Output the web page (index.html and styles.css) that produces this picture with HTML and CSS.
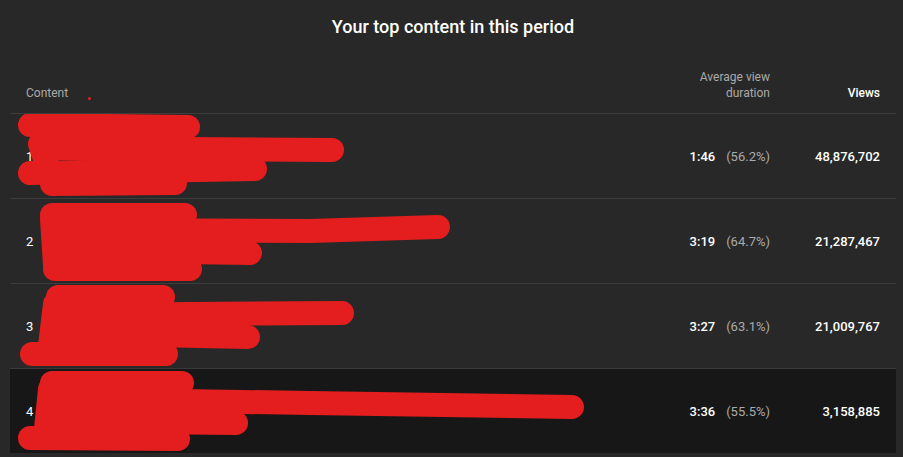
FILE: index.html
```html
<!DOCTYPE html>
<html lang="en">
<head>
    <meta charset="UTF-8">
    <title>Top content</title>
    <link rel="stylesheet" href="styles.css">
</head>
<body>
    <section class="card">
        <h2 class="title">Your top content in this period</h2>

        <div class="table">
            <div class="head">
                <div class="cell content-head">Content <span class="dot"></span></div>
                <div class="cell num">Average view duration</div>
                <div class="cell num views-head">Views</div>
            </div>

            <div class="row">
                <div class="cell content">1</div>
                <div class="cell num"><b>1:46</b><span class="pct">(56.2%)</span></div>
                <div class="cell num"><b>48,876,702</b></div>
                <svg class="mark" viewBox="0 0 600 85">
                    <path d="M20 11 L178 13"/>
                    <path d="M45 34 L322 36"/>
                    <path d="M20 59 L245 55"/>
                    <path d="M42 70 L165 69"/>
                    <path d="M30 30 L40 60"/>
                </svg>
            </div>

            <div class="row">
                <div class="cell content">2</div>
                <div class="cell num"><b>3:19</b><span class="pct">(64.7%)</span></div>
                <div class="cell num"><b>21,287,467</b></div>
                <svg class="mark" viewBox="0 0 600 85">
                    <path d="M42 16 L175 16"/>
                    <path d="M50 31 L300 32 L428 28"/>
                    <path d="M45 51 L240 54"/>
                    <path d="M45 70 L180 70"/>
                    <path d="M42 20 L45 66"/>
                </svg>
            </div>

            <div class="row">
                <div class="cell content">3</div>
                <div class="cell num"><b>3:27</b><span class="pct">(63.1%)</span></div>
                <div class="cell num"><b>21,009,767</b></div>
                <svg class="mark" viewBox="0 0 600 85">
                    <path d="M48 13 L153 13"/>
                    <path d="M50 31 L332 29"/>
                    <path d="M45 49 L238 53"/>
                    <path d="M22 70 L156 70"/>
                    <path d="M45 20 L40 62"/>
                </svg>
            </div>

            <div class="row active">
                <div class="cell content">4</div>
                <div class="cell num"><b>3:36</b><span class="pct">(55.5%)</span></div>
                <div class="cell num"><b>3,158,885</b></div>
                <svg class="mark" viewBox="0 0 600 85">
                    <path d="M42 14 L172 14"/>
                    <path d="M50 30 L300 34 L562 38"/>
                    <path d="M38 52 L226 54"/>
                    <path d="M20 69 L168 70"/>
                    <path d="M40 20 L36 60"/>
                </svg>
            </div>
        </div>
    </section>
</body>
</html>
```

FILE: styles.css
```css
body {
    margin: 0;
    background-color: #282828;
    font-family: Roboto, 'Liberation Sans', sans-serif;
    color: #fff;
}

.card {
    padding: 0 7px 0 10px;
}

.title {
    margin: 0;
    padding-top: 16px;
    font-size: 18px;
    line-height: 22px;
    font-weight: 500;
    text-align: center;
}

.table {
    display: flex;
    flex-direction: column;
}

.head,
.row {
    display: grid;
    grid-template-columns: 1fr 100px 126px;
}

.head {
    height: 75px;
    align-items: end;
    font-size: 12px;
    line-height: 16px;
    color: #aaa;
}

.head .cell {
    padding-bottom: 12px;
}

.cell {
    padding: 0 16px;
}

.cell.num {
    padding-left: 0;
    text-align: right;
}

.head .cell.num:nth-child(2) {
    padding-right: 0;
    padding-left: 20px;
}

.row .cell.num:nth-child(2) {
    padding-right: 0;
}

.views-head {
    color: #fff;
    font-weight: 500;
}

.content-head {
    position: relative;
}

.dot {
    position: absolute;
    left: 78px;
    top: 12px;
    width: 3px;
    height: 3px;
    border-radius: 50%;
    background-color: #e41e1e;
}

.row {
    position: relative;
    height: 85px;
    border-top: 1px solid #3d3d3d;
    box-sizing: border-box;
    align-items: center;
    font-size: 13px;
}

.row.active {
    background-color: #171717;
    border-top-color: #3a3a3a;
}

.row b {
    font-weight: 500;
}

.pct {
    color: #aaa;
    margin-left: 11px;
}

.mark {
    position: absolute;
    left: 0;
    top: 0;
    width: 600px;
    height: 85px;
    fill: none;
    stroke: #e41e1e;
    stroke-width: 24;
    stroke-linecap: round;
    stroke-linejoin: round;
}
```
